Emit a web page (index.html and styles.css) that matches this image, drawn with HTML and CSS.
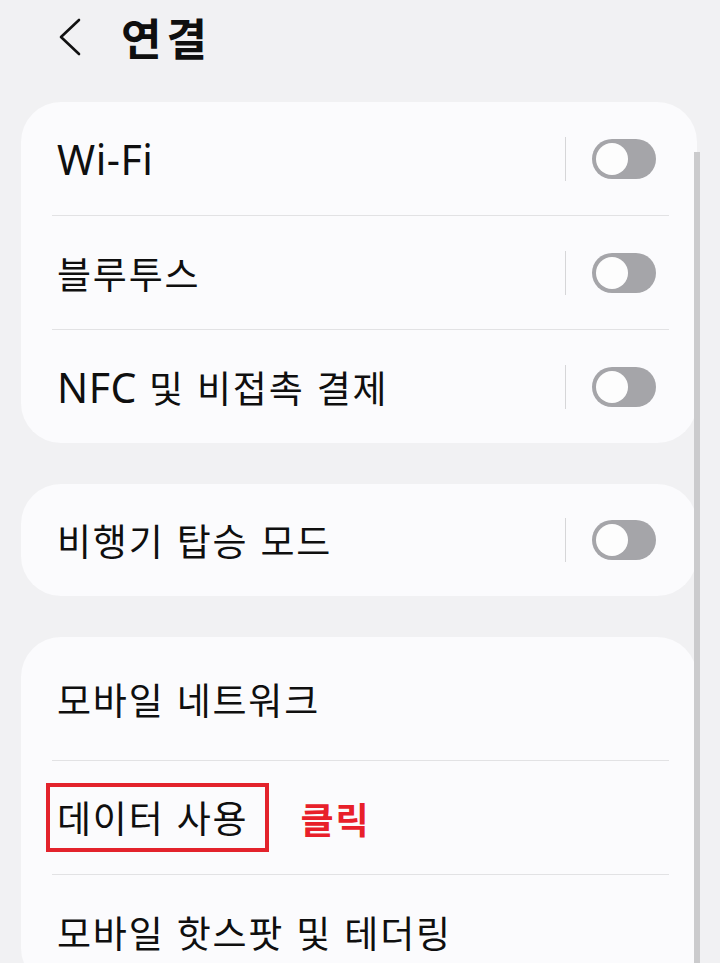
FILE: index.html
```html
<!DOCTYPE html>
<html lang="ko">
<head>
    <meta charset="UTF-8">
    <meta name="viewport" content="width=device-width, initial-scale=1.0">
    <title>연결</title>
    <link rel="stylesheet" href="styles.css">
</head>
<body>

    <!-- Header -->
    <div class="header">
        <svg class="back" width="26" height="40" viewBox="0 0 26 40">
            <polyline points="22,2 4,19 22,36" fill="none" stroke="#111" stroke-width="2.6" stroke-linecap="round" stroke-linejoin="round"/>
        </svg>
        <div class="title">연결</div>
    </div>

    <div class="list">
        <!-- Wireless group -->
        <div class="card">
            <div class="row">
                <span class="label"><span class="en">Wi-Fi</span></span>
                <div class="switch-wrap"><span class="divider"></span><span class="toggle"><span class="knob"></span></span></div>
            </div>
            <div class="sep"></div>
            <div class="row">
                <span class="label">블루투스</span>
                <div class="switch-wrap"><span class="divider"></span><span class="toggle"><span class="knob"></span></span></div>
            </div>
            <div class="sep"></div>
            <div class="row">
                <span class="label"><span class="en">NFC</span> 및 비접촉 결제</span>
                <div class="switch-wrap"><span class="divider"></span><span class="toggle"><span class="knob"></span></span></div>
            </div>
        </div>

        <!-- Airplane mode -->
        <div class="card">
            <div class="row short">
                <span class="label">비행기 탑승 모드</span>
                <div class="switch-wrap"><span class="divider"></span><span class="toggle"><span class="knob"></span></span></div>
            </div>
        </div>

        <!-- Network group -->
        <div class="card">
            <div class="row tall">
                <span class="label">모바일 네트워크</span>
            </div>
            <div class="sep"></div>
            <div class="row">
                <span class="label highlight">데이터 사용</span>
                <span class="note">클릭</span>
            </div>
            <div class="sep"></div>
            <div class="row">
                <span class="label">모바일 핫스팟 및 테더링</span>
            </div>
        </div>
    </div>

    <!-- Scrollbar -->
    <div class="scrollbar"></div>

</body>
</html>
```

FILE: styles.css
```css
body {
    font-family: "Noto Sans CJK KR", "Noto Sans", sans-serif;
    background-color: #f1f1f3;
    color: #0f0f0f;
    margin: 0;
    padding: 0;
    height: 963px;
    overflow: hidden;
    position: relative;
}
.header {
    height: 78px;
    display: flex;
    align-items: center;
    padding-left: 57px;
}
.header .back {
    display: block;
    margin-top: -3px;
}
.header .title {
    font-size: 44px;
    font-weight: 700;
    letter-spacing: 5px;
    margin-left: 38px;
    line-height: 1;
    margin-top: -4px;
}
.list {
    padding: 24px 23px 0 21px;
}
.card {
    background-color: #fbfbfd;
    border-radius: 40px;
    margin-bottom: 41px;
}
.row {
    height: 113px;
    display: flex;
    align-items: center;
    padding: 0 41px 0 36px;
}
.row.short {
    height: 112px;
}
.row.tall {
    height: 123px;
}
.sep {
    height: 1px;
    background-color: #e2e2e4;
    margin: 0 28px 0 31px;
}
.label {
    font-size: 37px;
    letter-spacing: 1.8px;
    line-height: 50px;
    white-space: nowrap;
}
.label .en {
    font-family: "Noto Sans", sans-serif;
    font-size: 41px;
    letter-spacing: 0.5px;
}
.label.highlight {
    border: 4px solid #e3232c;
    padding: 5px 17px 6px 7px;
    margin-left: -11px;
}
.note {
    font-size: 36px;
    font-weight: 700;
    letter-spacing: 2px;
    color: #e8202a;
    margin-left: 31px;
}
.switch-wrap {
    margin-left: auto;
    display: flex;
    align-items: center;
}
.divider {
    width: 1.5px;
    height: 44px;
    background-color: #d6d6d8;
    margin-right: 26px;
}
.toggle {
    width: 64px;
    height: 40px;
    border-radius: 20px;
    background-color: #a5a5a9;
    position: relative;
}
.toggle .knob {
    position: absolute;
    left: 4px;
    top: 4px;
    width: 32px;
    height: 32px;
    border-radius: 50%;
    background-color: #fdfdfd;
}
.scrollbar {
    position: absolute;
    left: 694px;
    top: 152px;
    width: 6px;
    bottom: 0;
    background-color: #cbcbcd;
}
```
